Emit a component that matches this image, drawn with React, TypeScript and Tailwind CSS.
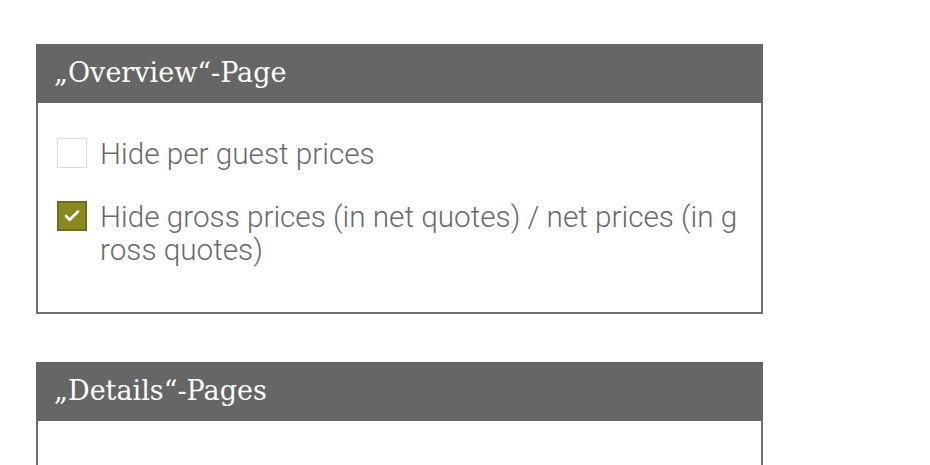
import { Check } from "lucide-react";

function Row({ checked, children }: { checked?: boolean; children: React.ReactNode }) {
  return (
    <div className="flex items-start gap-[13px]">
      {checked ? (
        <div className="mt-[1px] flex h-[30px] w-[30px] shrink-0 items-center justify-center border-2 border-[#6f6e1a] bg-[#8a891f]">
          <Check className="h-[18px] w-[18px] text-white" strokeWidth={3.5} />
        </div>
      ) : (
        <div className="mt-[1px] h-[30px] w-[30px] shrink-0 border border-[#dcdcdc] bg-white" />
      )}
      <div className="text-[29.7px] leading-[33px] font-light text-[#6a6a6a]">{children}</div>
    </div>
  );
}

function Panel({ title, children, bodyClass }: { title: string; children?: React.ReactNode; bodyClass: string }) {
  return (
    <div className="w-[727px] border-2 border-t-0 border-[#6e6e6e]">
      <div className="-mx-[2px] flex h-[59px] items-center bg-[#666666] pl-[18px] text-[27px] text-white [font-family:'DejaVu_Serif',serif]">
        {title}
      </div>
      <div className={bodyClass}>{children}</div>
    </div>
  );
}

export default function App() {
  return (
    <div className="h-[465px] w-[930px] overflow-hidden bg-white pl-[36px] pt-[44px] [font-family:Roboto,'Liberation_Sans',sans-serif]">
      <Panel title="„Overview“-Page" bodyClass="flex h-[209px] flex-col gap-[30px] pl-[19px] pt-[34px]">
        <Row>Hide per guest prices</Row>
        <Row checked>
          Hide gross prices (in net quotes) / net prices (in g
          <br />
          ross quotes)
        </Row>
      </Panel>
      <div className="h-[48px]" />
      <Panel title="„Details“-Pages" bodyClass="h-[60px]" />
    </div>
  );
}
